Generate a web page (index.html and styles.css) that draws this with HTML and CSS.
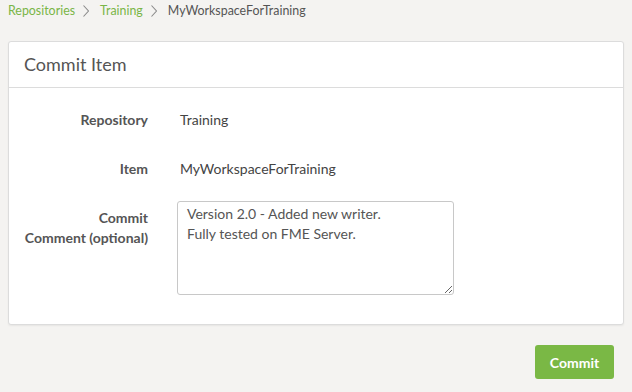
FILE: index.html
```html
<!DOCTYPE html>
<html>
<head>
<meta charset="utf-8">
<link rel="stylesheet" href="styles.css">
</head>
<body>
<nav class="crumbs">
  <a class="crumb-link">Repositories</a>
  <svg class="chev" width="6" height="12" viewBox="0 0 6 12"><polyline points="0.5,0.5 5.5,6 0.5,11.5" fill="none" stroke="#8a8a8a" stroke-width="1.1"/></svg>
  <a class="crumb-link">Training</a>
  <svg class="chev" width="6" height="12" viewBox="0 0 6 12"><polyline points="0.5,0.5 5.5,6 0.5,11.5" fill="none" stroke="#8a8a8a" stroke-width="1.1"/></svg>
  <span class="crumb-current">MyWorkspaceForTraining</span>
</nav>
<section class="card">
  <header class="card-head">Commit Item</header>
  <div class="card-body">
    <div class="row">
      <div class="label">Repository</div>
      <div class="value">Training</div>
    </div>
    <div class="row">
      <div class="label">Item</div>
      <div class="value">MyWorkspaceForTraining</div>
    </div>
    <div class="row">
      <div class="label">Commit<br>Comment (optional)</div>
      <textarea class="comment">Version 2.0 - Added new writer.
Fully tested on FME Server.</textarea>
    </div>
  </div>
</section>
<div class="actions">
  <button class="btn">Commit</button>
</div>
</body>
</html>
```

FILE: styles.css
```css
html, body {
  margin: 0;
  background: #f4f3f1;
}
body {
  padding: 2px 8px 0 8px;
  font-family: Lato, "Open Sans", sans-serif;
  font-size: 14px;
  color: #555;
}
.crumbs {
  display: flex;
  align-items: center;
  height: 18px;
  font-size: 12.4px;
  line-height: 18px;
}
.crumb-link {
  color: #79b547;
}
.chev {
  margin: 0 11px 0 8px;
}
.crumb-current {
  color: #555;
}
.card {
  margin-top: 21px;
  background: #fff;
  border: 1px solid #dcdcdc;
  border-radius: 3px;
  box-shadow: 0 1px 2px rgba(0,0,0,0.06);
}
.card-head {
  height: 45px;
  line-height: 45px;
  padding-left: 15px;
  font-size: 18px;
  color: #555;
  border-bottom: 1px solid #dcdcdc;
}
.card-body {
  padding: 15px 0 29px 0;
  display: flex;
  flex-direction: column;
  gap: 15px;
}
.row {
  display: grid;
  grid-template-columns: 139px 1fr;
  column-gap: 32px;
  align-items: start;
}
.label {
  text-align: right;
  font-weight: 700;
  line-height: 20px;
  padding-top: 7px;
  color: #555;
}
.value {
  line-height: 20px;
  padding: 7px 0;
  color: #444;
}
.comment {
  box-sizing: border-box;
  width: 277px;
  height: 94px;
  margin: 0 0 0 -3px;
  padding: 2px 9px;
  font-family: Lato, "Open Sans", sans-serif;
  font-size: 14px;
  line-height: 20px;
  color: #555;
  border: 1px solid #c8c8c8;
  border-radius: 3px;
  resize: both;
}
.actions {
  display: flex;
  justify-content: flex-end;
  padding: 20px 10px 0 0;
}
.btn {
  width: 79px;
  height: 34px;
  border: none;
  border-radius: 3px;
  background: #7ab845;
  color: #fff;
  font-family: Lato, "Open Sans", sans-serif;
  font-size: 14px;
  font-weight: 700;
}
```
